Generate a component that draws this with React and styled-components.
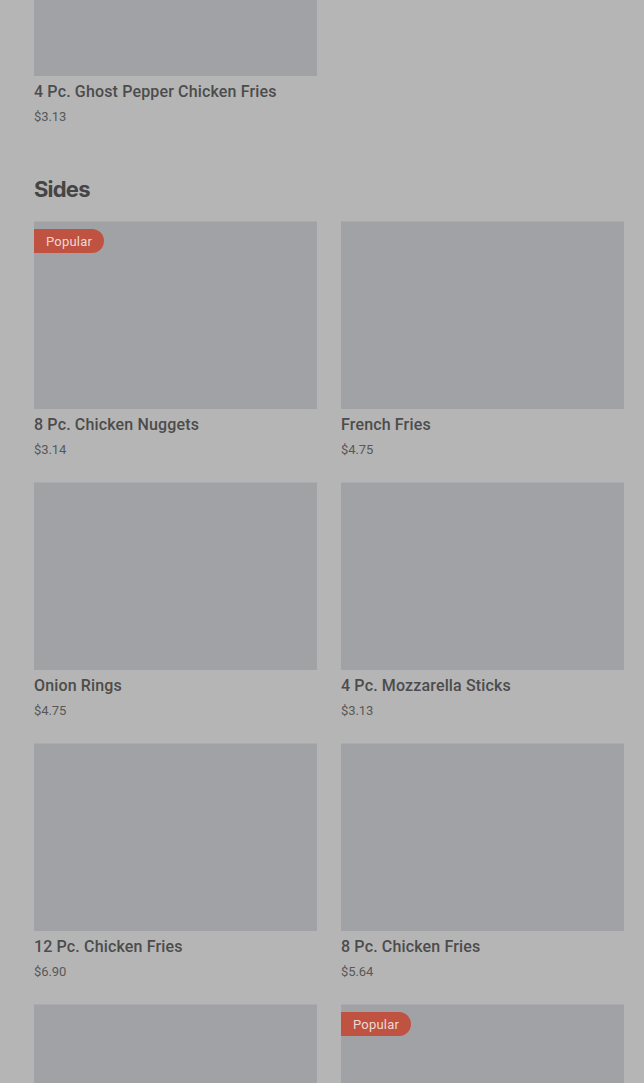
import React from "react";
import styled, { createGlobalStyle } from "styled-components";

const Global = createGlobalStyle`
  html, body { margin: 0; padding: 0; background: #b5b5b5; overflow: hidden; }
  body { font-family: "Inter", "Roboto", "Liberation Sans", sans-serif; }
`;

const Page = styled.main`
  width: 644px;
  box-sizing: border-box;
  padding: 0 20px 0 34px;
  margin-top: -112px;
  display: flex;
  flex-direction: column;
  gap: 49px;
`;

const Section = styled.section`
  display: flex;
  flex-direction: column;
  gap: 18px;
`;

const Heading = styled.h2`
  margin: 0;
  font-size: 22px;
  line-height: 28px;
  font-weight: 700;
  letter-spacing: -0.8px;
  color: #454545;
`;

const Grid = styled.div`
  display: grid;
  grid-template-columns: 283px 283px;
  column-gap: 24px;
  row-gap: 23px;
`;

const Card = styled.article`
  display: flex;
  flex-direction: column;
`;

const Thumb = styled.div`
  position: relative;
  height: 188px;
  background: #a0a2a5;
  border-top: 1px solid #a9abae;
  box-sizing: border-box;
`;

const Badge = styled.span`
  position: absolute;
  top: 7px;
  left: 0;
  height: 24px;
  padding: 0 12px 0 12px;
  display: flex;
  align-items: center;
  background: #bf5241;
  color: #ecd9d5;
  font-family: "Roboto", "Liberation Sans", sans-serif;
  font-size: 13px;
  letter-spacing: 0.2px;
  border-radius: 0 12px 12px 0;
`;

const Title = styled.div`
  margin-top: 6px;
  font-family: "Roboto", "Liberation Sans", sans-serif;
  font-size: 16px;
  line-height: 20px;
  font-weight: 500;
  letter-spacing: 0.15px;
  color: #4c4c4c;
`;

const Price = styled.div`
  margin-top: 6px;
  font-family: "Roboto", "Liberation Sans", sans-serif;
  font-size: 13px;
  line-height: 18px;
  color: #585858;
  letter-spacing: -0.1px;
`;

const Item = ({ name, price, popular }) => (
  <Card>
    <Thumb>{popular && <Badge>Popular</Badge>}</Thumb>
    <Title>{name}</Title>
    <Price>{price}</Price>
  </Card>
);

const previous = [{ name: "4 Pc. Ghost Pepper Chicken Fries", price: "$3.13" }];

const sides = [
  { name: "8 Pc. Chicken Nuggets", price: "$3.14", popular: true },
  { name: "French Fries", price: "$4.75" },
  { name: "Onion Rings", price: "$4.75" },
  { name: "4 Pc. Mozzarella Sticks", price: "$3.13" },
  { name: "12 Pc. Chicken Fries", price: "$6.90" },
  { name: "8 Pc. Chicken Fries", price: "$5.64" },
  { name: "Hash Browns", price: "$2.49" },
  { name: "Chicken Fries", price: "$4.29", popular: true },
];

export default function App() {
  return (
    <>
      <Global />
      <Page>
        <Section>
          <Grid>
            {previous.map((it) => (
              <Item key={it.name} {...it} />
            ))}
          </Grid>
        </Section>
        <Section>
          <Heading>Sides</Heading>
          <Grid>
            {sides.map((it) => (
              <Item key={it.name} {...it} />
            ))}
          </Grid>
        </Section>
      </Page>
    </>
  );
}
